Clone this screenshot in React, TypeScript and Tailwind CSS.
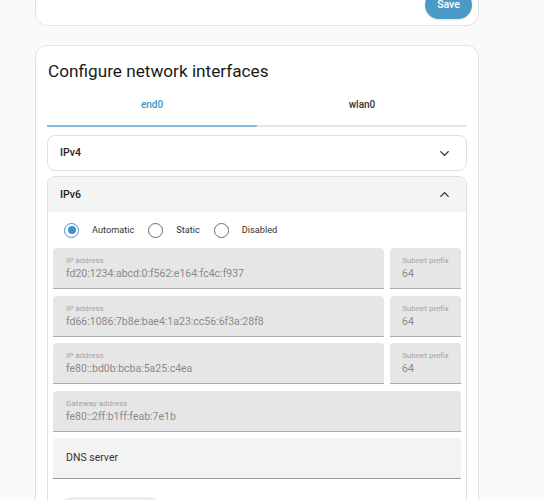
import React, { useState } from 'react';
import { ChevronDown, ChevronUp } from 'lucide-react';

const font = { fontFamily: 'Roboto, "Noto Sans", sans-serif' };

interface FieldProps {
  label: string;
  value: string;
  className?: string;
}

function DisabledField({ label, value, className = '' }: FieldProps) {
  return (
    <div className={`h-[41px] bg-[#e6e6e6] rounded-t-[4px] border-b border-[#ababab] pl-[13px] pr-[6px] pt-[8px] ${className}`}>
      <div className="text-[8px] leading-[10px] text-[#a3a3a3] whitespace-nowrap">{label}</div>
      <div className="text-[10.5px] leading-[16px] text-[#8a8a8a] whitespace-nowrap">{value}</div>
    </div>
  );
}

function AddressRow({ ip }: { ip: string }) {
  return (
    <div className="flex gap-[6px]">
      <DisabledField label="IP address" value={ip} className="flex-1" />
      <DisabledField label="Subnet prefix" value="64" className="w-[71px] !pl-[12px]" />
    </div>
  );
}

function Radio({ checked, label }: { checked?: boolean; label: string }) {
  return (
    <div className="flex items-center">
      <div
        className={`w-[15px] h-[15px] rounded-full border-[1.5px] flex items-center justify-center ${
          checked ? 'border-[#3f92c6]' : 'border-[#6b6b6b]'
        }`}
      >
        {checked && <div className="w-[8px] h-[8px] rounded-full bg-[#3f92c6]" />}
      </div>
      <span className="ml-[13px] text-[9.2px] text-[#333]">{label}</span>
    </div>
  );
}

export default function App() {
  const [tab, setTab] = useState(0);

  return (
    <div className="min-h-screen bg-[#fafafa] overflow-hidden" style={font}>
      {/* previous card, scrolled mostly out of view */}
      <div className="ml-[35px] w-[444px] h-[36px] -mt-[10px] bg-white border border-[#e3e3e3] rounded-b-[12px] flex justify-end items-start pr-[6px]">
        <button className="h-[28px] w-[47px] rounded-full bg-[#4b9ac6] text-white text-[10.5px] font-medium shadow-sm">
          Save
        </button>
      </div>

      <div className="ml-[35px] mt-[19px] w-[444px] bg-white border border-[#e3e3e3] rounded-t-[12px] px-[11px] pb-4">
        <h2 className="pt-[13px] pl-[1px] text-[17.2px] leading-[24px] text-[#1a1a1a]">Configure network interfaces</h2>

        {/* tabs */}
        <div className="flex border-b-2 border-[#e6e6e6]">
          {['end0', 'wlan0'].map((t, i) => (
            <button
              key={t}
              onClick={() => setTab(i)}
              className={`flex-1 h-[44px] -mb-[2px] border-b-2 pt-[1px] text-[10px] font-medium ${
                tab === i ? 'border-[#86bcdc] text-[#3b95c8]' : 'border-transparent text-[#333]'
              }`}
            >
              {t}
            </button>
          ))}
        </div>

        {/* IPv4 */}
        <div className="mt-[8px] h-[36px] border border-[#e0e0e0] rounded-[8px] flex items-center justify-between pl-[12px] pr-[14px]">
          <span className="text-[10.5px] font-medium text-[#222]">IPv4</span>
          <ChevronDown className="w-[15px] h-[15px] text-[#333]" strokeWidth={2.2} />
        </div>

        {/* IPv6 */}
        <div className="mt-[5px] border border-[#e0e0e0] rounded-t-[8px] overflow-hidden">
          <div className="h-[35px] bg-[#f4f4f4] flex items-center justify-between pl-[12px] pr-[14px]">
            <span className="text-[10.5px] font-medium text-[#222]">IPv6</span>
            <ChevronUp className="w-[15px] h-[15px] text-[#333]" strokeWidth={2.2} />
          </div>
          <div className="px-[5px] pb-4">
            <div className="flex items-center gap-[14px] pl-[11px] h-[36px]">
              <Radio checked label="Automatic" />
              <Radio label="Static" />
              <Radio label="Disabled" />
            </div>
            <div className="flex flex-col gap-[6.5px]">
              <AddressRow ip="fd20:1234:abcd:0:f562:e164:fc4c:f937" />
              <AddressRow ip="fd66:1086:7b8e:bae4:1a23:cc56:6f3a:28f8" />
              <AddressRow ip="fe80::bd0b:bcba:5a25:c4ea" />
              <DisabledField label="Gateway address" value="fe80::2ff:b1ff:feab:7e1b" />
              <div className="h-[41px] bg-[#f3f3f3] rounded-t-[4px] border-b border-[#9a9a9a] px-[13px] flex items-center">
                <span className="text-[10.5px] text-[#333]">DNS server</span>
              </div>
            </div>
            <button className="mt-[18px] ml-[5px] h-[30px] w-[105px] rounded-full bg-[#e3f0f8]" />
          </div>
        </div>
      </div>
    </div>
  );
}
